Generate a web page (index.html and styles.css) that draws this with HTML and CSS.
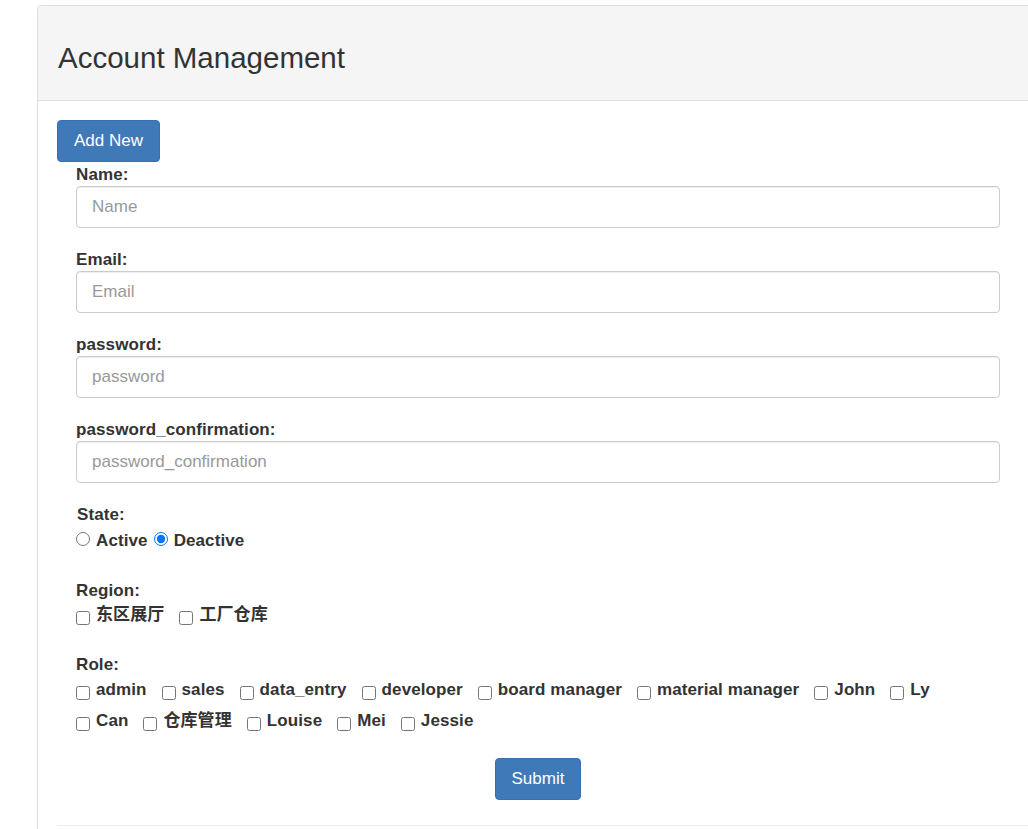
FILE: index.html
```html
<!DOCTYPE html>
<html lang="en">
<head>
<meta charset="utf-8">
<title>Account Management</title>
<link rel="stylesheet" href="styles.css">
</head>
<body>
<div class="panel">
  <div class="panel-heading">
    <h1 class="panel-title">Account Management</h1>
  </div>
  <div class="panel-body">
    <div class="toolbar">
      <button class="btn" type="button">Add New</button>
    </div>
    <form class="form">
      <div class="group">
        <label class="lbl" for="name">Name:</label>
        <input class="control" id="name" type="text" placeholder="Name">
      </div>
      <div class="group">
        <label class="lbl" for="email">Email:</label>
        <input class="control" id="email" type="text" placeholder="Email">
      </div>
      <div class="group">
        <label class="lbl" for="pw">password:</label>
        <input class="control" id="pw" type="password" placeholder="password">
      </div>
      <div class="group">
        <label class="lbl" for="pwc">password_confirmation:</label>
        <input class="control" id="pwc" type="password" placeholder="password_confirmation">
      </div>
      <div class="group group-choice">
        <div class="lbl lbl-state">State:</div>
        <div class="opts radios">
          <label class="opt"><input type="radio" name="state" class="radio">Active</label>
          <label class="opt"><input type="radio" name="state" class="radio" checked>Deactive</label>
        </div>
      </div>
      <div class="group group-choice">
        <div class="lbl">Region:</div>
        <div class="opts checks">
          <label class="opt"><input type="checkbox" class="check">东区展厅</label>
          <label class="opt"><input type="checkbox" class="check">工厂仓库</label>
        </div>
      </div>
      <div class="group group-role">
        <div class="lbl">Role:</div>
        <div class="opts checks roles">
          <label class="opt"><input type="checkbox" class="check">admin</label>
          <label class="opt"><input type="checkbox" class="check">sales</label>
          <label class="opt"><input type="checkbox" class="check">data_entry</label>
          <label class="opt"><input type="checkbox" class="check">developer</label>
          <label class="opt"><input type="checkbox" class="check">board manager</label>
          <label class="opt"><input type="checkbox" class="check">material manager</label>
          <label class="opt"><input type="checkbox" class="check">John</label>
          <label class="opt"><input type="checkbox" class="check">Ly</label>
          <label class="opt"><input type="checkbox" class="check">Can</label>
          <label class="opt"><input type="checkbox" class="check">仓库管理</label>
          <label class="opt"><input type="checkbox" class="check">Louise</label>
          <label class="opt"><input type="checkbox" class="check">Mei</label>
          <label class="opt"><input type="checkbox" class="check">Jessie</label>
        </div>
      </div>
      <div class="actions">
        <button class="btn" type="submit">Submit</button>
      </div>
    </form>
    <hr class="rule">
  </div>
</div>
</body>
</html>
```

FILE: styles.css
```css
html, body {
  margin: 0;
  padding: 0;
  overflow: hidden;
  background: #fff;
}

body {
  font-family: "Liberation Sans", Arial, "Noto Sans CJK SC", sans-serif;
  color: #333;
}

.panel {
  margin: 5px 0 0 37px;
  width: 1030px;
  min-height: 900px;
  border: 1px solid #ddd;
  border-radius: 4px 4px 0 0;
  box-sizing: border-box;
}

.panel-heading {
  height: 95px;
  box-sizing: border-box;
  padding: 35px 20px 0;
  background: #f5f5f5;
  border-bottom: 1px solid #ddd;
  border-radius: 3px 3px 0 0;
}

.panel-title {
  margin: 0;
  font-size: 29.5px;
  font-weight: 400;
  line-height: 33px;
  color: #333;
}

.panel-body {
  padding: 19px 0 0 19px;
}

.toolbar {
  display: flex;
}

.btn {
  height: 42px;
  padding: 0 16px;
  font-family: "Liberation Sans", Arial, sans-serif;
  font-size: 17px;
  line-height: 40px;
  color: #fff;
  background: #3f79b7;
  border: 1px solid #3771ae;
  border-radius: 4px;
  cursor: pointer;
}

.form {
  margin: 2px 0 0 19px;
  width: 924px;
}

.group {
  margin-bottom: 21px;
}

.group-choice {
  margin-bottom: 29px;
}

.group-role {
  margin-bottom: 27px;
}

.lbl {
  display: block;
  font-size: 17px;
  font-weight: 700;
  line-height: 20px;
  letter-spacing: 0.1px;
  padding-top: 1px;
  margin-bottom: 1px;
  color: #333;
}

.lbl-state {
  padding-left: 1px;
}

.control {
  display: block;
  width: 100%;
  height: 42px;
  box-sizing: border-box;
  padding: 0 15px;
  font-family: "Liberation Sans", Arial, sans-serif;
  font-size: 17px;
  color: #555;
  background: #fff;
  border: 1px solid #ccc;
  border-radius: 4px;
  box-shadow: inset 0 1px 1px rgba(0, 0, 0, 0.075);
  outline: none;
}

.control::placeholder {
  color: #999;
}

.opts {
  display: flex;
  flex-wrap: wrap;
  row-gap: 11px;
  font-size: 17px;
  font-weight: 700;
  line-height: 20px;
  letter-spacing: 0.1px;
}

.radios {
  padding-top: 5px;
  column-gap: 6px;
}

.checks {
  padding-top: 3px;
  column-gap: 15px;
}

.checks.roles {
  width: 880px;
  padding-top: 4px;
}

.opt {
  display: flex;
  align-items: flex-start;
  font-family: "Liberation Sans", Arial, "Noto Sans CJK SC", sans-serif;
  white-space: nowrap;
}

.radio {
  width: 14px;
  height: 14px;
  margin: 1px 6px 0 0;
}

.check {
  width: 14px;
  height: 14px;
  margin: 6px 6px 0 0;
}

.actions {
  display: flex;
  justify-content: center;
}

.rule {
  margin: 25px 0 0;
  border: 0;
  border-top: 1px solid #eee;
}
```
